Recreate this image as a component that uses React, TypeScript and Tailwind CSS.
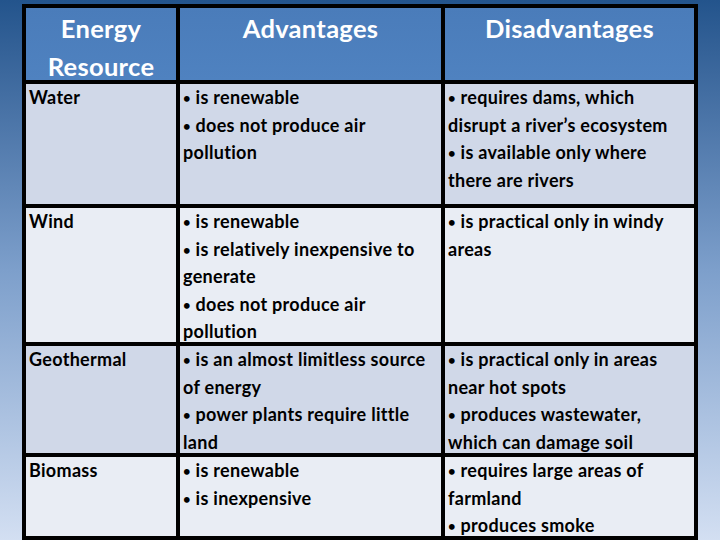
const rows = [
  {
    name: "Water",
    bg: "bg-[#d0d8e8]",
    adv: ["• is renewable", "• does not produce air", "pollution"],
    dis: ["• requires dams, which", "disrupt a river’s ecosystem", "• is available only where", "there are rivers"],
  },
  {
    name: "Wind",
    bg: "bg-[#e9edf4]",
    adv: ["• is renewable", "• is relatively inexpensive to", "generate", "• does not produce air", "pollution"],
    dis: ["• is practical only in windy", "areas"],
  },
  {
    name: "Geothermal",
    bg: "bg-[#d0d8e8]",
    adv: ["• is an almost limitless source", "of energy", "• power plants require little", "land"],
    dis: ["• is practical only in areas", "near hot spots", "• produces wastewater,", "which can damage soil"],
  },
  {
    name: "Biomass",
    bg: "bg-[#e9edf4]",
    adv: ["• is renewable", "• is inexpensive"],
    dis: ["• requires large areas of", "farmland", "• produces smoke"],
  },
];

const Lines = ({ items }: { items: string[] }) => (
  <div>
    {items.map((t, i) => (
      <div key={i} className="whitespace-nowrap h-[27.5px]">
        {t.startsWith("• ") ? (
          <>
            <span className="text-[13px] leading-none align-[1px]">•</span> {t.slice(2)}
          </>
        ) : (
          t
        )}
      </div>
    ))}
  </div>
);

export default function App() {
  return (
    <div className="w-[720px] h-[540px] overflow-hidden bg-gradient-to-b from-[#23548c] via-[#7d9fcb] to-[#d3dff2] pt-[4px] pl-[22px] font-['Lato',sans-serif]">
      <div className="grid grid-cols-[150px_261px_249px] grid-rows-[72px_120px_134px_107px_79px] gap-[4px] p-[4px] bg-black w-[676px] text-[18px] leading-[27.5px] tracking-[0.3px] font-bold text-black">
        {["Energy Resource", "Advantages", "Disadvantages"].map((h) => (
          <div
            key={h}
            className="bg-gradient-to-b from-[#4a7cba] to-[#4f82c0] text-white text-center text-[25.5px] leading-[38px] pt-[1px] px-2"
          >
            {h}
          </div>
        ))}
        {rows.map((r) => (
          <>
            <div key={r.name + "n"} className={`${r.bg} pl-[3px]`}>
              {r.name}
            </div>
            <div key={r.name + "a"} className={`${r.bg} pl-[3px]`}>
              <Lines items={r.adv} />
            </div>
            <div key={r.name + "d"} className={`${r.bg} pl-[3px]`}>
              <Lines items={r.dis} />
            </div>
          </>
        ))}
      </div>
    </div>
  );
}
